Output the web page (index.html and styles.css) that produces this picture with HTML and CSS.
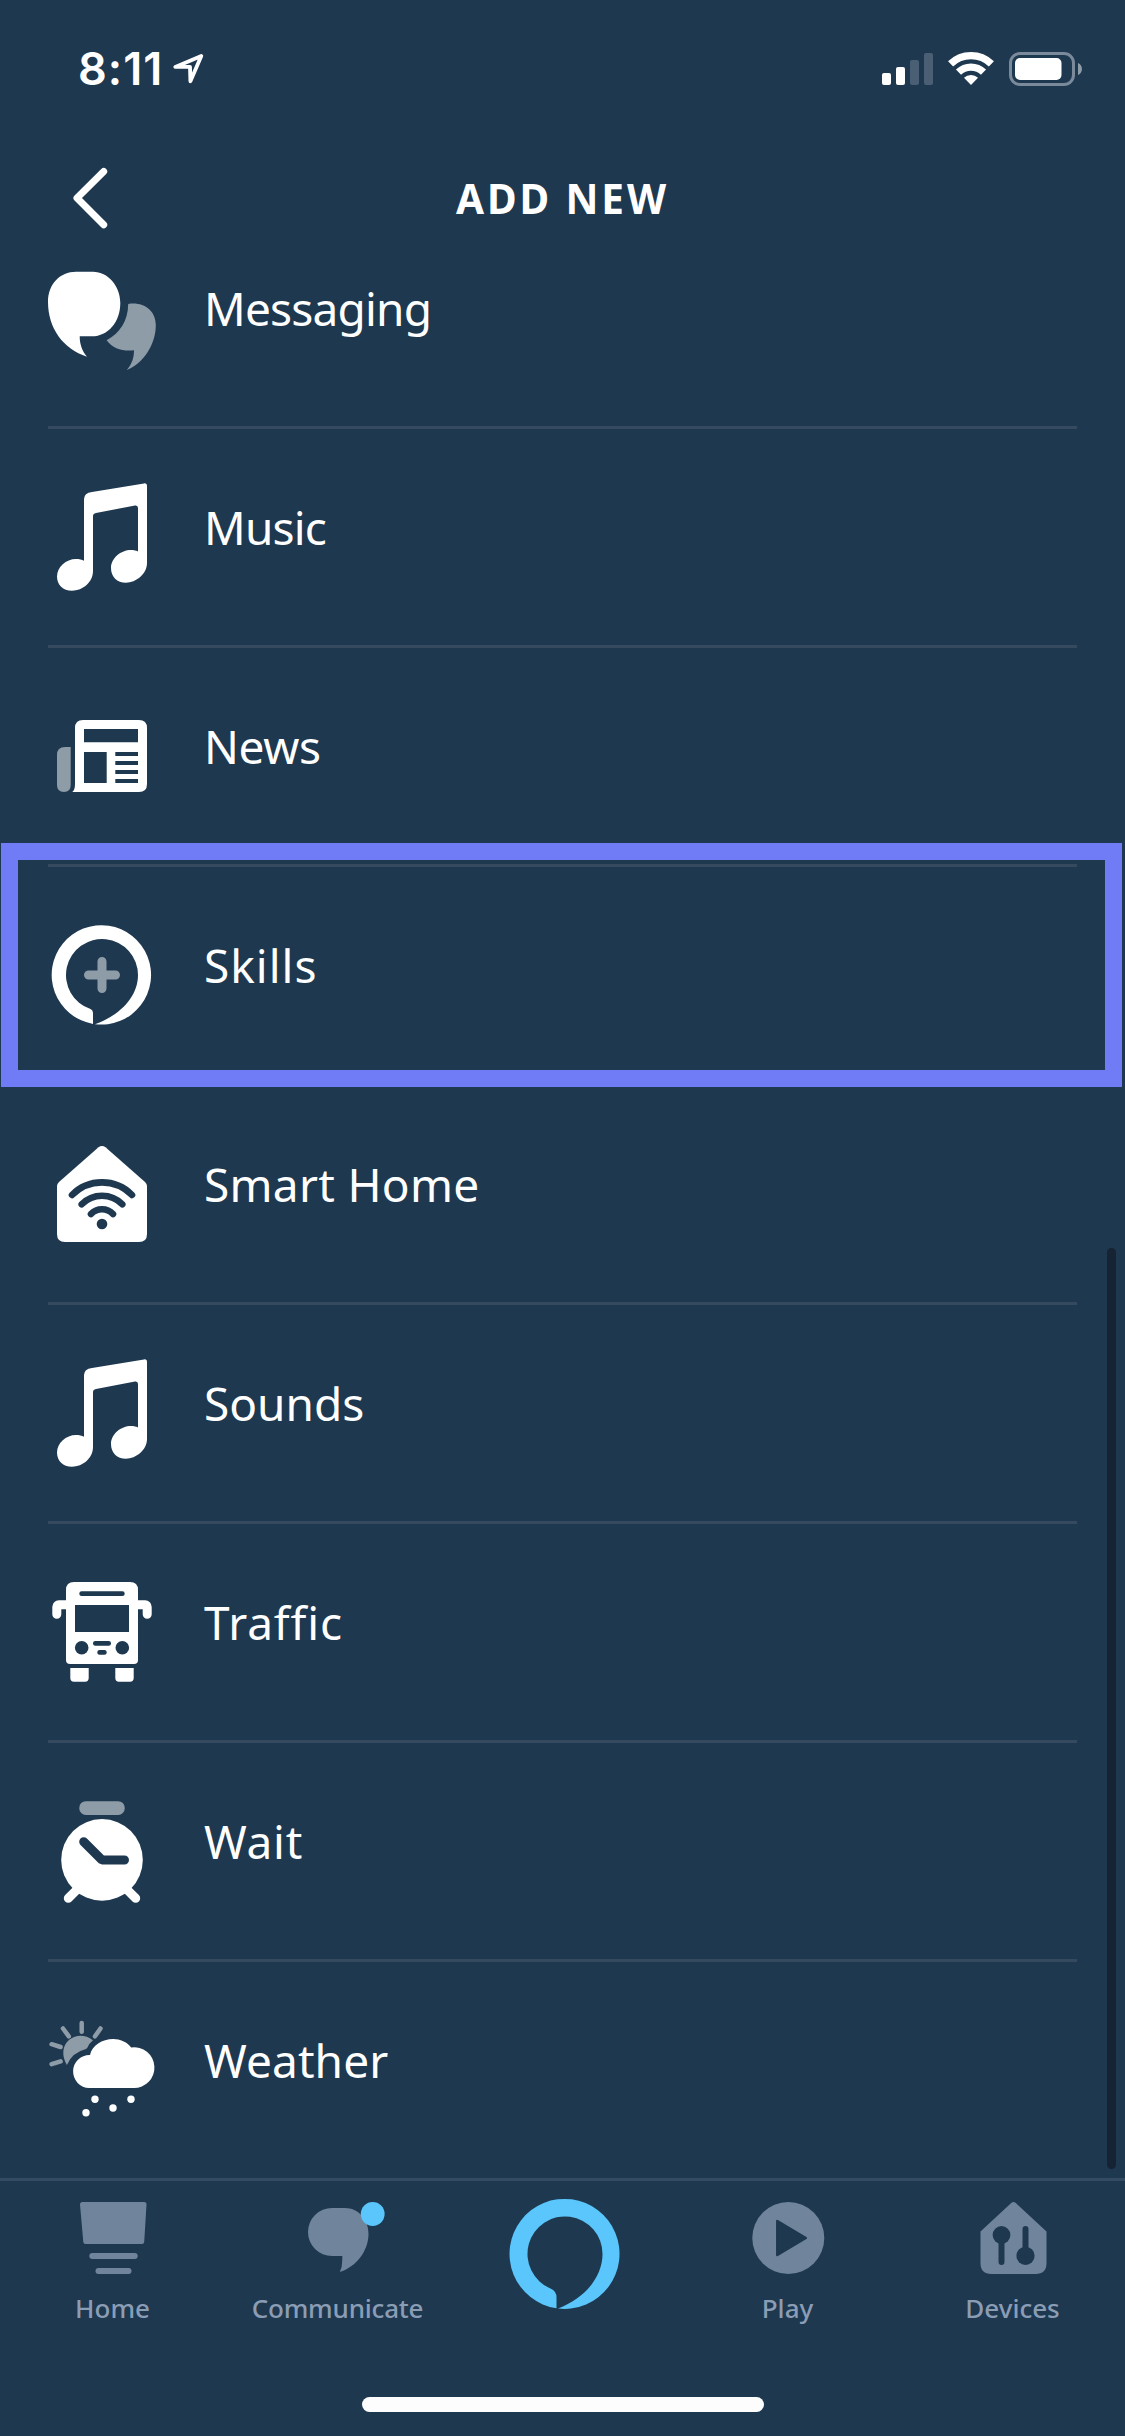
FILE: index.html
```html
<!DOCTYPE html>
<html lang="en">
<head>
<meta charset="utf-8">
<title>Add New</title>
<link rel="stylesheet" href="styles.css">
</head>
<body>
<div class="screen">
  <header class="status">
    <div class="status-left">
      <span class="time">8:11</span>
      <svg class="location" width="32" height="32" viewBox="172 53 32 32"><path d="M201.3 56 175.3 66.9H190L190.4 81.3Z" fill="none" stroke="#fff" stroke-width="3.8" stroke-linejoin="round"/></svg>
    </div>
    <div class="status-right">
      <svg width="51" height="32" viewBox="882 53 51 32">
        <g fill="#fff"><rect x="882" y="73" width="9" height="12" rx="2"/><rect x="896" y="67" width="9" height="18" rx="2"/></g>
        <g fill="#4b5f74"><rect x="910" y="60" width="9" height="25" rx="2"/><rect x="924" y="53" width="9" height="32" rx="2"/></g>
      </svg>
      <svg class="wifi" width="46" height="34" viewBox="948 52 46 34">
        <g fill="none" stroke="#fff" stroke-width="7.3"><path d="M950.6 63.9A29.3 29.3 0 0 1 991.4 63.9"/><path d="M958.5 72.1A18 18 0 0 1 983.5 72.1"/></g>
        <path d="M971 85 964 77.8A10 10 0 0 1 978 77.8Z" fill="#fff"/>
      </svg>
      <svg class="battery" width="74" height="34" viewBox="1009 52 74 34">
        <rect x="1010.5" y="53.5" width="63" height="31" rx="9.5" fill="none" stroke="#7b8a9b" stroke-width="3"/>
        <rect x="1015" y="58" width="46.5" height="22" rx="5" fill="#fff"/>
        <path d="M1078 63C1083.3 65 1083.3 73 1078 75Z" fill="#8e9ca8"/>
      </svg>
    </div>
  </header>

  <nav class="titlebar">
    <svg class="back" width="36" height="62" viewBox="72 167 36 62"><path d="M103.7 171.5 77 198 103.7 224.7" fill="none" stroke="#fff" stroke-width="7" stroke-linecap="round" stroke-linejoin="round"/></svg>
    <h1 class="title">ADD NEW</h1>
  </nav>

  <main class="content">
    <ul class="list">
      <li class="row">
        <svg class="icon" viewBox="0 0 108 108">
          <path d="M31.7 72.3C31.7 80 34 87 39 92.7 15 85 0 64 0 38 0 20 12 7.7 28 7.7H45C60 7.7 72.3 22 72.3 39 72.3 58 60 72.3 44 72.3Z" fill="#fff"/>
          <path d="M80.2 40C95 37.5 107.8 46 107.8 61 107.8 82 94 100 78.8 106 84 100 86 94 86 86.3 75 87.5 65 85 58.6 76.3 72 69 80 57 80.2 40Z" fill="#8e9ca8"/>
        </svg>
        <span class="label label-messaging">Messaging</span>
      </li>
      <li class="row">
        <svg class="icon" viewBox="0 0 108 108"><path d="M36 16Q36 10 44 8.9L96 .4Q99 0 99 3V80C99 91 88 99.7 78 99.7 69 99.7 63 94 63 85 63 75 73 67 83 67 86 67 88 67.5 90 68.5V25Q90 22 87 22.5L48 30Q45 30.6 45 33V88C45 99 35 107.7 24 107.7 15 107.7 9 102 9 93.5 9 84 18 76 28 76 31 76 34 76.5 36 77.7Z" fill="#fff"/></svg>
        <span class="label label-music">Music</span>
      </li>
      <li class="row">
        <svg class="icon" viewBox="0 0 108 108">
          <path d="M35 18H91Q99 18 99 26V82Q99 90 91 90H24.3Q27 88 27 82V26Q27 18 35 18ZM36 27V40.3H90V27ZM36 50V81H58.7V50ZM67.3 50V54H90V50ZM67.3 59V63H90V59ZM67.3 68V72H90V68ZM67.3 77V81H90V77Z" fill="#fff" fill-rule="evenodd"/>
          <path d="M17 45H22.7V83Q22.7 90 16 90 9 90 9 83V53Q9 45 17 45Z" fill="#8e9ca8"/>
        </svg>
        <span class="label label-news">News</span>
      </li>
      <li class="row row-selected">
        <svg class="icon" viewBox="0 0 108 108">
          <path d="M45 102.9A49.7 49.7 0 1 1 47 103.2C73 94 90 75 90 54A36 36 0 1 0 42.5 88.1Q45 89.3 45 92Z" fill="#fff"/>
          <path d="M54 40.5V67.5M40.5 54H67.5" stroke="#8e9ca8" stroke-width="9" stroke-linecap="round"/>
        </svg>
        <span class="label label-skills">Skills</span>
      </li>
      <li class="row">
        <svg class="icon" viewBox="0 0 108 108">
          <path d="M50.5 7.3Q54 4.5 57.5 7.3L97 42Q99 44 99 46V94Q99 102 91 102H17Q9 102 9 94V46Q9 44 11 42Z" fill="#fff"/>
          <g fill="none" stroke="#1e3850" stroke-width="6.6" stroke-linecap="round"><path d="M24 55A42 42 0 0 1 84 55"/><path d="M33.7 64.3A28.3 28.3 0 0 1 74.3 64.3"/><path d="M43 74A15.2 15.2 0 0 1 65 74"/></g>
          <circle cx="54" cy="84" r="5.3" fill="#1e3850"/>
        </svg>
        <span class="label label-home">Smart Home</span>
      </li>
      <li class="row">
        <svg class="icon" viewBox="0 0 108 108"><path d="M36 16Q36 10 44 8.9L96 .4Q99 0 99 3V80C99 91 88 99.7 78 99.7 69 99.7 63 94 63 85 63 75 73 67 83 67 86 67 88 67.5 90 68.5V25Q90 22 87 22.5L48 30Q45 30.6 45 33V88C45 99 35 107.7 24 107.7 15 107.7 9 102 9 93.5 9 84 18 76 28 76 31 76 34 76.5 36 77.7Z" fill="#fff"/></svg>
        <span class="label label-sounds">Sounds</span>
      </li>
      <li class="row">
        <svg class="icon" viewBox="0 0 108 108">
          <g fill="#fff"><path d="M26 4H82Q90 4 90 12V82Q90 86 86 86H22Q18 86 18 82V12Q18 4 26 4Z"/><path d="M22.3 90H40.7V100Q40.7 103.7 37 103.7H26Q22.3 103.7 22.3 100ZM67.3 90H85.7V100Q85.7 103.7 82 103.7H71Q67.3 103.7 67.3 100Z"/></g>
          <path d="M20 26.8H11Q8.8 26.8 8.8 29V36.2M88 26.8H97Q99.2 26.8 99.2 29V36.2" fill="none" stroke="#fff" stroke-width="9" stroke-linecap="round"/>
          <g fill="#1e3850"><rect x="31.3" y="13.3" width="45.4" height="4.7" rx="2.3"/><path d="M27 27H81V54H27Z"/><circle cx="33.7" cy="69.7" r="6.8"/><circle cx="74.3" cy="69.7" r="6.8"/><rect x="45" y="63" width="18" height="4.7" rx="2.3"/><rect x="49.3" y="72" width="9.4" height="4.7" rx="2.3"/></g>
        </svg>
        <span class="label label-traffic">Traffic</span>
      </li>
      <li class="row">
        <svg class="icon" viewBox="0 0 108 108">
          <rect x="31.3" y="4.2" width="45.4" height="13.8" rx="6.5" fill="#8e9ca8"/>
          <circle cx="54" cy="62.9" r="40.8" fill="#fff"/>
          <path d="M31 90.6 20.3 101.3M77 90.6 87.7 101.3" stroke="#fff" stroke-width="9" stroke-linecap="round"/>
          <path d="M35.7 44.7 54 63H76.5" fill="none" stroke="#1e3850" stroke-width="9" stroke-linecap="round" stroke-linejoin="bevel"/>
        </svg>
        <span class="label label-wait">Wait</span>
      </li>
      <li class="row">
        <svg class="icon" viewBox="0 0 108 108">
          <path d="M18.9 49C13.5 40 14 29.5 21.5 23.6 28 18.5 37 18 45 24.3Q41 27.5 39.5 31.5L38 33Q24 36.5 18.9 49Z" fill="#8e9ca8"/>
          <path d="M33.7 7V15.8M15 12.5 20.8 20.3M52.5 12.5 47 20.3M3.6 28.2 12.6 31M3.6 48.2 12.6 45.4" stroke="#8e9ca8" stroke-width="4.5" stroke-linecap="round"/>
          <path d="M41.2 72A16.5 16.5 0 0 1 42 39C44 29.5 54 23 65.3 23 72 23 79 26 83.2 31.4A20.4 20.4 0 1 1 85.6 72Z" fill="#fff"/>
          <g fill="#fff"><circle cx="47" cy="83.3" r="3.7"/><circle cx="83" cy="83.3" r="3.7"/><circle cx="65" cy="92" r="3.7"/><circle cx="38" cy="96.7" r="3.7"/></g>
        </svg>
        <span class="label label-weather">Weather</span>
      </li>
    </ul>
    <div class="scrollbar"></div>
  </main>

  <footer class="tabbar">
    <div class="tab">
      <svg class="tab-icon" viewBox="0 0 72 72" fill="#70859b"><path d="M5.5 0H67Q69.7 0 69.5 2.5L67.2 40Q67 42 65 42H8.5Q6.5 42 6.3 40L3 2.5Q3 0 5.5 0Z"/><rect x="12.3" y="51" width="48.4" height="6" rx="3"/><rect x="18.5" y="66" width="36" height="6" rx="3"/></svg>
      <span class="tab-label">Home</span>
    </div>
    <div class="tab">
      <svg class="tab-icon" viewBox="0 0 72 72"><path d="M30 6H43C56 6 66.5 17 66.5 32 66.5 49 54 65 37.8 70Q40.3 65 40.3 58V54H30A24 24 0 0 1 30 6Z" fill="#70859b"/><circle cx="70.7" cy="12" r="11.9" fill="#5ac6fb"/></svg>
      <span class="tab-label tab-communicate">Communicate</span>
    </div>
    <div class="tab">
      <svg class="alexa" viewBox="0 0 110 110"><path d="M46.5 109.3A55 55 0 1 1 48 109.5C76 99 92.5 77 92.5 55A37.5 37.5 0 1 0 40.5 89.5Q46.5 92 46.5 98.5Z" fill="#5ac6fb"/></svg>
    </div>
    <div class="tab">
      <svg class="tab-icon" viewBox="0 0 72 72"><circle cx="36.3" cy="36" r="36" fill="#70859b"/><path d="M25.3 19 53.8 36 25.3 53Z" fill="#1e3850" stroke="#1e3850" stroke-width="2.5" stroke-linejoin="round"/></svg>
      <span class="tab-label">Play</span>
    </div>
    <div class="tab">
      <svg class="tab-icon" viewBox="0 0 72 72"><path d="M34.500 .8Q36.500-.8 38.500 .8L69.500 29.500V61Q69.500 72 58.500 72H14.500Q3.500 72 3.500 61V29.500Z" fill="#70859b"/><g fill="#1e3850" stroke="#1e3850"><circle cx="24.5" cy="33" r="8.9" stroke="none"/><circle cx="48.5" cy="53.8" r="9.1" stroke="none"/><path d="M24.5 33V60M48.5 53V27" stroke-width="6" stroke-linecap="round"/></g></svg>
      <span class="tab-label">Devices</span>
    </div>
  </footer>
  <div class="home-indicator"></div>
</div>
</body>
</html>
```

FILE: styles.css
```css
*, ::after { box-sizing: border-box; }
body { margin: 0; background: #1e3850; font-family: "Noto Sans", "Open Sans", sans-serif; color: #fff; }
svg { display: block; flex: none; overflow: visible; }
.screen { width: 1125px; height: 2436px; display: flex; flex-direction: column; background: #1e3850; overflow: hidden; }

.status { height: 132px; padding: 52px 42px 0 78px; display: flex; justify-content: space-between; align-items: flex-start; }
.status-left, .status-right { display: flex; align-items: flex-start; }
.time { width: 94px; font: 600 45px/34px Inter, sans-serif; letter-spacing: 1px; white-space: nowrap; }
.location { margin-top: 1px; }
.status-right svg:first-child { margin-top: 1px; }
.wifi { margin-left: 15px; }
.battery { margin-left: 15px; }

.titlebar { height: 78px; padding: 35px 72px 0; display: grid; grid-template-columns: 36px 1fr 36px; align-items: start; }
.title { margin: 0; text-align: center; font-size: 40.5px; font-weight: 700; line-height: 63px; letter-spacing: 2.9px; white-space: nowrap; }

.content { position: relative; height: 1968px; }
.list { list-style: none; margin: 0; padding: 0 48px; }
.row { position: relative; height: 219px; padding-top: 54px; display: flex; align-items: flex-start; border-bottom: 3px solid #35495f; }
.row:last-child { height: 216px; border-bottom: 0; }
.icon { width: 108px; height: 108px; }
.label { margin: 12px 0 0 48px; font-size: 46px; line-height: 64px; white-space: nowrap; }
.label-messaging { letter-spacing: -0.8px; }
.label-music { letter-spacing: -0.8px; }
.label-news { letter-spacing: -0.4px; }
.label-skills { letter-spacing: 1px; }
.label-home { letter-spacing: 0.3px; }
.label-traffic { letter-spacing: 0.9px; }
.label-wait { letter-spacing: 0.7px; }
.label-weather { letter-spacing: 0.1px; }
.row-selected::after { content: ""; position: absolute; left: -47px; top: -24px; width: 1121px; height: 244px; border: 17px solid #6f7cf6; }
.scrollbar { position: absolute; left: 1107px; top: 1038px; width: 9px; height: 921px; border-radius: 5px; background: #162333; }

.tabbar { height: 219px; padding-top: 21px; display: flex; border-top: 3px solid #334b63; }
.tab { flex: 1; display: flex; flex-direction: column; align-items: center; }
.tab-icon { width: 72px; height: 72px; }
.tab-label { margin-top: 16px; font-size: 26px; font-weight: 500; line-height: 36px; color: #8b9db5; white-space: nowrap; }
.tab-communicate { letter-spacing: -0.2px; }
.alexa { width: 110px; height: 110px; margin: -3px 0 0 4px; }
.home-indicator { width: 402px; height: 15px; margin-left: 362px; border-radius: 8px; background: #fdfdfd; }
```
